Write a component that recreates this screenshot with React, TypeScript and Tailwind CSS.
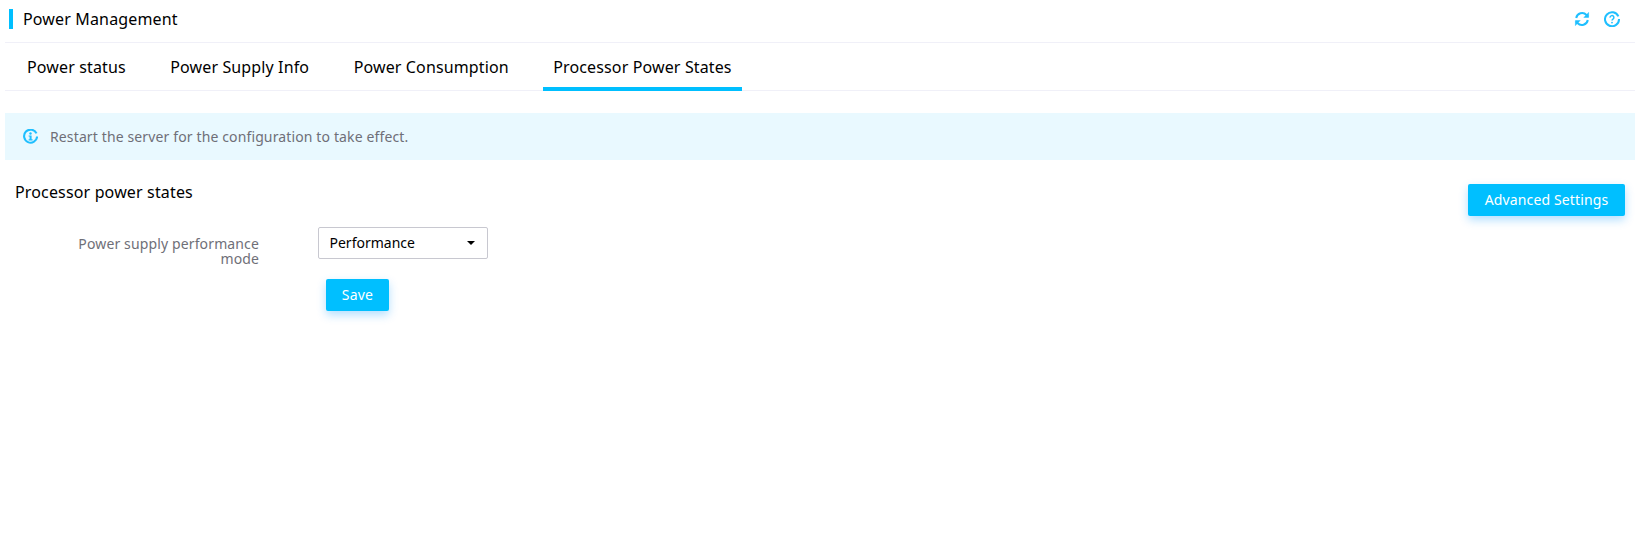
export default function App() {
  const tabs = ["Power status", "Power Supply Info", "Power Consumption", "Processor Power States"];
  return (
    <div className="h-[540px] w-[1640px] overflow-hidden bg-white pl-[5px] pr-[5px] font-['Noto_Sans','Open_Sans',sans-serif] text-[#000]">
      <header className="flex h-[43px] items-center justify-between border-b border-[#f0f0f8] pb-[5px]">
        <div className="flex items-center">
          <span className="ml-[4px] h-[20px] w-[4px] bg-[#00bfff]" />
          <h1 className="ml-[10px] text-[16px] leading-[20px] tracking-[0.15px]">Power Management</h1>
        </div>
        <div className="mr-[15px] flex items-center gap-[14px]">
          <svg width="16" height="16" viewBox="0 0 16 16" fill="none" stroke="#1fbfff" strokeWidth="2">
            <path d="M2.2 7a6 6 0 0 1 10.3-3L14 5.6" />
            <path d="M14.6 1.2v5.2H9.6" fill="#1fbfff" strokeWidth="0.5" />
            <path d="M13.8 9a6 6 0 0 1-10.3 3L2 10.4" />
            <path d="M1.4 14.8V9.6h5" fill="#1fbfff" strokeWidth="0.5" />
          </svg>
          <svg width="16" height="16" viewBox="0 0 16 16" fill="none" stroke="#1fbfff">
            <path d="M14.4 5.4A7 7 0 1 0 15 8" strokeWidth="2" />
            <path d="M6.1 6.6a1.9 1.9 0 1 1 2.9 1.5c-.7.5-1 .8-1 1.5" strokeWidth="1.5" />
            <circle cx="8" cy="11.6" r=".9" fill="#1fbfff" stroke="none" />
          </svg>
        </div>
      </header>
      <nav className="flex h-[48px] gap-[24.5px] border-b border-[#f0f0f8] pl-[12px]">
        {tabs.map((t, i) => (
          <div
            key={t}
            className={`flex h-[48px] items-center border-b-4 px-[10px] pt-[3px] text-[16px] tracking-[0.13px] ${i === 3 ? "border-[#00bfff]" : "border-transparent"}`}
          >
            {t}
          </div>
        ))}
      </nav>
      <div className="mt-[22px] flex h-[47px] items-center bg-[#e9f9ff] pl-[18px] text-[14px] tracking-[0.13px] text-[#6f6f78]">
        <svg width="15" height="15" viewBox="0 0 15 15" fill="none" className="mr-[12px]">
          <path d="M13.5 4.4A6.5 6.5 0 1 0 14.1 7.5" stroke="#1fbfff" strokeWidth="2.1" />
          <circle cx="7.5" cy="4.5" r="1.2" fill="#1fbfff" />
          <path d="M5.6 6.4h3v3.9h1v1.2H5.6v-1.2h1V7.6h-1z" fill="#1fbfff" />
        </svg>
        Restart the server for the configuration to take effect.
      </div>
      <section className="flex justify-between pl-[10px] pr-[10px]">
        <div>
          <h2 className="mt-[21px] text-[16px] leading-[22px] tracking-[0.15px]">Processor power states</h2>
          <div className="mt-[24px] flex">
            <div className="flex w-[244px] justify-end">
              <label className="w-[200px] pt-[9px] text-right text-[14px] leading-[15px] tracking-[0.13px] text-[#6f6f78]">
                Power supply performance mode
              </label>
            </div>
            <div className="ml-[59px]">
              <div className="flex h-[32px] w-[170px] items-center justify-between rounded-[2px] border border-[#c8c8d0] pb-[2px] pl-[10.5px] pr-[12px] text-[14px]">
                Performance
                <span className="mt-[2px] h-0 w-0 border-x-[4px] border-t-[4px] border-x-transparent border-t-black" />
              </div>
              <button className="ml-[8px] mt-[20px] flex h-[32px] w-[63px] items-center justify-center rounded-[2px] bg-[#00bfff] pb-[1px] text-[14px] tracking-[0.2px] text-white shadow-[0_4px_10px_rgba(0,150,255,0.3)]">
                Save
              </button>
            </div>
          </div>
        </div>
        <button className="mt-[24px] h-[32px] w-[157px] rounded-[2px] bg-[#00bfff] pb-[2px] text-[14px] tracking-[0.13px] text-white shadow-[0_4px_10px_rgba(0,150,255,0.3)]">
          Advanced Settings
        </button>
      </section>
    </div>
  );
}
